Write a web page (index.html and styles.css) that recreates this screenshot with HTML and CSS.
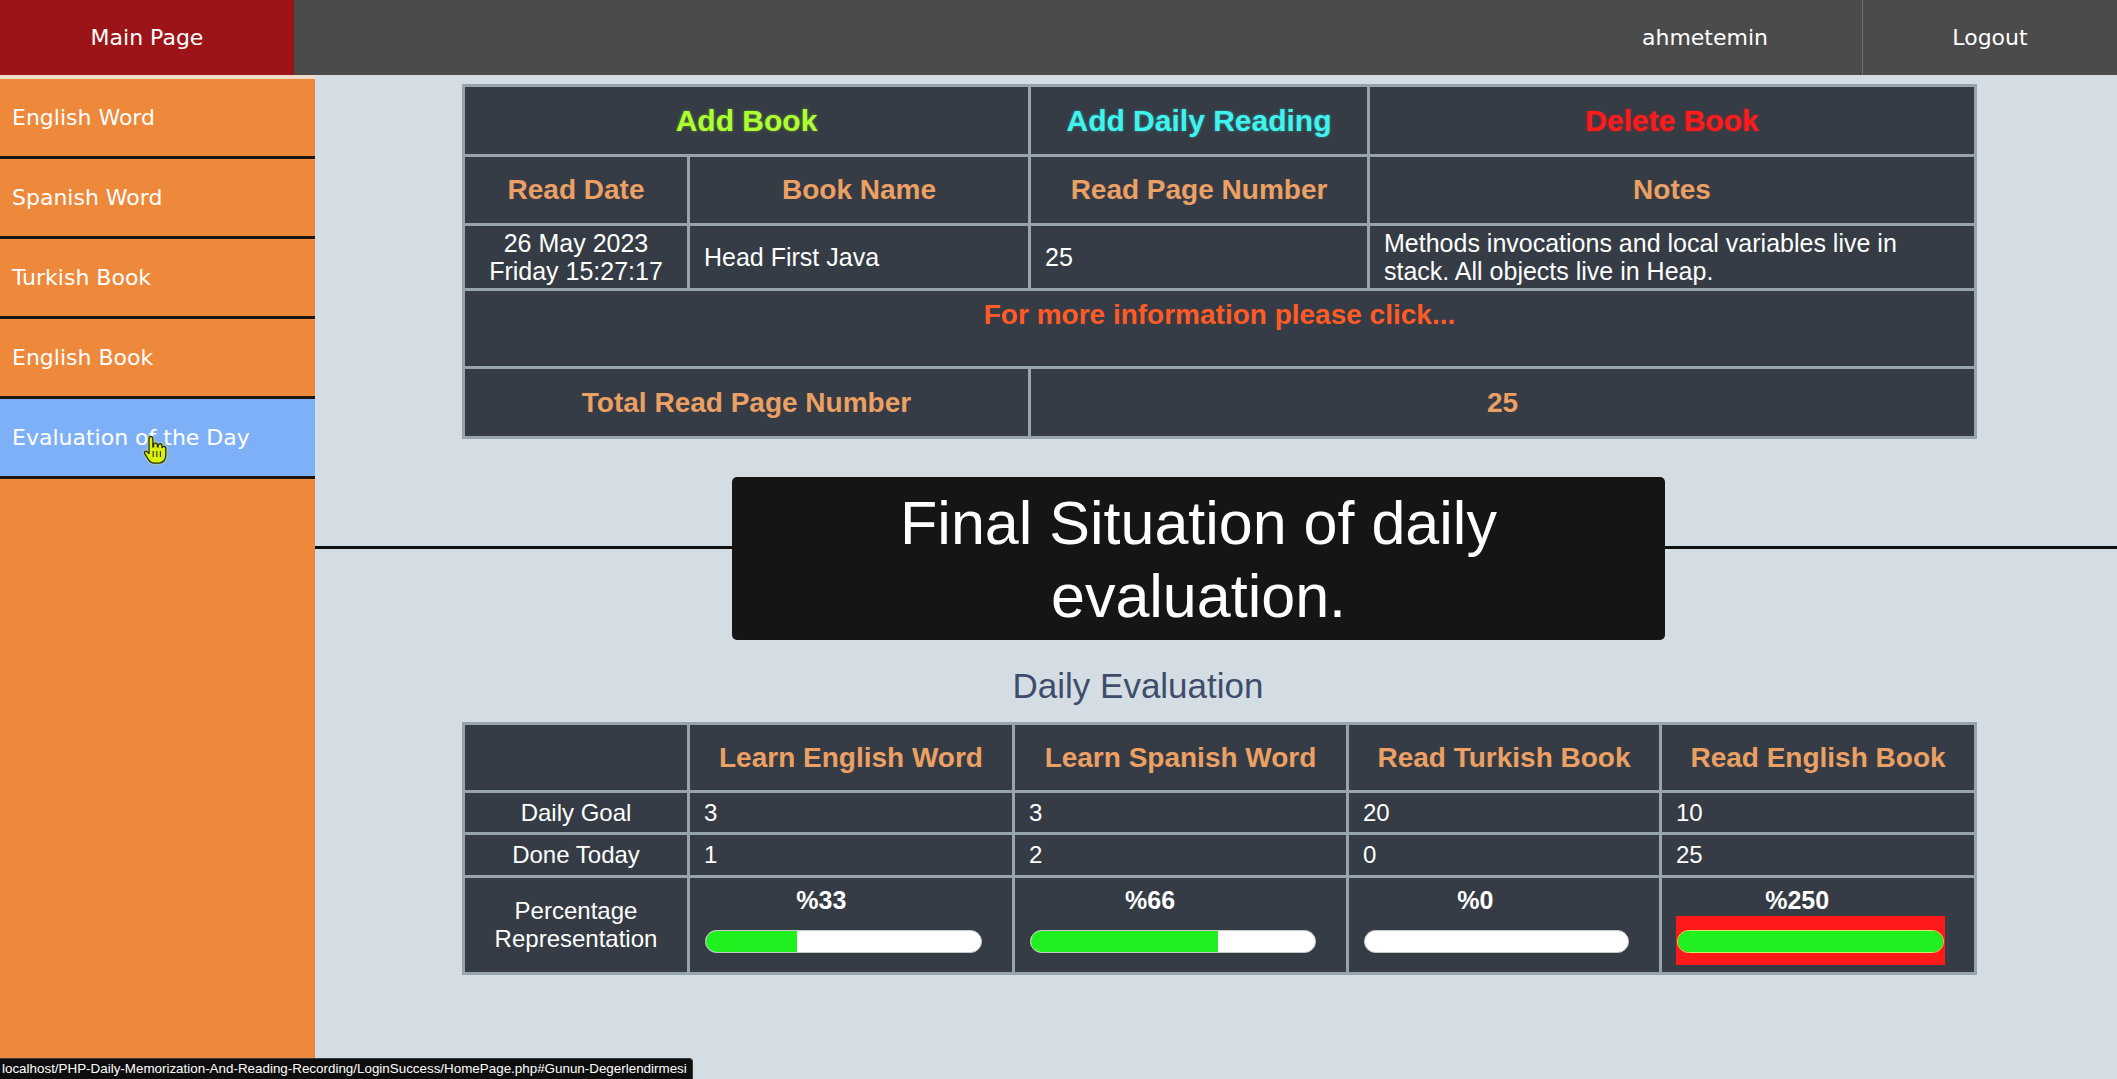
FILE: index.html
```html
<!DOCTYPE html>
<html lang="en">
<head>
<meta charset="utf-8">
<title>Home Page</title>
<link rel="stylesheet" href="styles.css">
</head>
<body>
<header class="topbar">
  <a class="brand" href="#">Main Page</a>
  <div class="spacer"></div>
  <a class="user" href="#">ahmetemin</a>
  <a class="logout" href="#">Logout</a>
</header>
<div class="layout">
  <nav class="sidebar">
    <a class="nav-item" href="#">English Word</a>
    <a class="nav-item" href="#">Spanish Word</a>
    <a class="nav-item" href="#">Turkish Book</a>
    <a class="nav-item" href="#">English Book</a>
    <a class="nav-item active" href="#Gunun-Degerlendirmesi">Evaluation of the Day</a>
  </nav>
  <main class="content">
    <table class="grid book-table">
      <colgroup>
        <col class="bc1"><col class="bc2"><col class="bc3"><col class="bc4">
      </colgroup>
      <tr class="r-action">
        <td colspan="2" class="action add-book">Add Book</td>
        <td class="action add-reading">Add Daily Reading</td>
        <td class="action delete-book">Delete Book</td>
      </tr>
      <tr class="r-head">
        <th>Read Date</th>
        <th>Book Name</th>
        <th>Read Page Number</th>
        <th>Notes</th>
      </tr>
      <tr class="r-data">
        <td class="center">26 May 2023<br>Friday 15:27:17</td>
        <td>Head First Java</td>
        <td>25</td>
        <td>Methods invocations and local variables live in stack. All objects live in Heap.</td>
      </tr>
      <tr class="r-more">
        <td colspan="4" class="more">For more information please click...</td>
      </tr>
      <tr class="r-total">
        <th colspan="2">Total Read Page Number</th>
        <th colspan="2">25</th>
      </tr>
    </table>

    <hr class="divider">

    <h2 class="eval-title" id="Gunun-Degerlendirmesi">Daily Evaluation</h2>

    <table class="grid eval-table">
      <colgroup>
        <col class="ec1"><col class="ec2"><col class="ec3"><col class="ec4"><col class="ec5">
      </colgroup>
      <tr class="e-head">
        <th></th>
        <th>Learn English Word</th>
        <th>Learn Spanish Word</th>
        <th>Read Turkish Book</th>
        <th>Read English Book</th>
      </tr>
      <tr class="e-goal">
        <td class="center">Daily Goal</td>
        <td>3</td><td>3</td><td>20</td><td>10</td>
      </tr>
      <tr class="e-done">
        <td class="center">Done Today</td>
        <td>1</td><td>2</td><td>0</td><td>25</td>
      </tr>
      <tr class="e-pct">
        <td class="center label2">Percentage<br>Representation</td>
        <td class="pct-cell">
          <div class="pct">%33</div>
          <div class="bar-wrap"><div class="bar"><div class="fill" style="width:33%"></div></div></div>
        </td>
        <td class="pct-cell">
          <div class="pct">%66</div>
          <div class="bar-wrap"><div class="bar"><div class="fill" style="width:66%"></div></div></div>
        </td>
        <td class="pct-cell">
          <div class="pct">%0</div>
          <div class="bar-wrap"><div class="bar"><div class="fill" style="width:0%"></div></div></div>
        </td>
        <td class="pct-cell">
          <div class="pct pct-over">%250</div>
          <div class="bar-wrap over"><div class="bar"><div class="fill" style="width:100%"></div></div></div>
        </td>
      </tr>
    </table>
  </main>
</div>

<div class="caption">Final Situation of daily<br>evaluation.</div>

<svg class="cursor" viewBox="0 0 20 24" width="24" height="29" aria-hidden="true">
  <path d="M5 2a1.6 1.6 0 0 1 3.2 0v7h.6V7.4a1.6 1.6 0 0 1 3.2 0V9h.6V8a1.6 1.6 0 0 1 3.2 0v1.6h.3a1.5 1.5 0 0 1 2.9.6V16c0 3.4-2.2 6.5-5.6 6.5H9c-2 0-3.2-1-4.3-2.6L1.4 14.6c-.7-1.1.5-2.6 1.7-1.8L5 14.6z" fill="#d9f20c" stroke="#2a2a10" stroke-width="1.1" stroke-linejoin="round"/>
  <path d="M8.5 12.5v5M11.5 12.5v5M14.5 12.5v5" stroke="#2a2a10" stroke-width="0.9" fill="none"/>
</svg>

<div class="statusbar">localhost/PHP-Daily-Memorization-And-Reading-Recording/LoginSuccess/HomePage.php#Gunun-Degerlendirmesi</div>
</body>
</html>
```

FILE: styles.css
```css
html, body {
  margin: 0;
  padding: 0;
}

body {
  background: #d3dde3;
  font-family: "Liberation Sans", Arial, sans-serif;
  overflow: hidden;
}

a {
  text-decoration: none;
  color: #fff;
}

/* ---------- top bar ---------- */
.topbar {
  display: flex;
  height: 75px;
  background: #4b4b4b;
  font-family: "DejaVu Sans", Verdana, sans-serif;
  font-size: 22px;
}

.topbar a {
  display: flex;
  align-items: center;
  justify-content: center;
  color: #fff;
}

.brand {
  width: 294px;
  background: #9d1418;
}

.spacer {
  flex: 1;
}

.user {
  width: 314px;
}

.logout {
  width: 254px;
  border-left: 1px solid #6e6e6e;
}

/* ---------- layout ---------- */
.layout {
  display: flex;
  min-height: calc(100vh - 75px);
}

.sidebar {
  width: 315px;
  flex: none;
  background: #ee883a;
  border-top: 4px solid #f1dccb;
  display: flex;
  flex-direction: column;
}

.nav-item {
  display: flex;
  align-items: center;
  height: 77px;
  padding-left: 12px;
  border-bottom: 3px solid #1d1613;
  font-family: "DejaVu Sans", Verdana, sans-serif;
  font-size: 22px;
  color: #fff;
}

.nav-item.active {
  background: #7eb0f8;
}

.content {
  flex: 1;
  background: #d3dde3;
  padding-top: 9px;
}

/* ---------- tables ---------- */
.grid {
  border-collapse: separate;
  border-spacing: 3px;
  background: #97a4ae;
  table-layout: fixed;
  width: 1515px;
  margin-left: 147px;
  font-family: "Liberation Sans", Arial, sans-serif;
}

.grid td,
.grid th {
  background: #353c45;
  color: #fff;
  padding: 0 14px;
  vertical-align: middle;
  text-align: left;
  font-weight: normal;
}

.grid th {
  color: #eca064;
  font-size: 28px;
  font-weight: bold;
  text-align: center;
}

.bc1 { width: 222px; }
.bc2 { width: 338px; }
.bc3 { width: 336px; }
.bc4 { width: 604px; }

.r-action td { height: 67px; }
.r-head th { height: 66px; }
.r-data td { height: 62px; font-size: 25px; line-height: 28px; }
.r-more td { height: 67px; }
.r-total th { height: 67px; }

.grid .action {
  font-size: 30px;
  font-weight: bold;
  text-align: center;
}

.grid .add-book {
  color: #adff2f;
  text-shadow: 0 0 3px rgba(173, 255, 47, 0.45);
}

.grid .add-reading {
  color: #3ff3ef;
  text-shadow: 0 0 3px rgba(63, 243, 239, 0.45);
}

.grid .delete-book {
  color: #ff1b1b;
  text-shadow: 0 0 3px rgba(255, 27, 27, 0.5);
}

.grid .center {
  text-align: center;
}

.grid .more {
  color: #ff5b27;
  font-size: 28px;
  font-weight: bold;
  text-align: center;
  vertical-align: top;
  padding-top: 8px;
  line-height: 32px;
}

.divider {
  border: 0;
  height: 3px;
  background: #111;
  margin: 107px 0 0;
}

.eval-title {
  margin: 117px 0 16px;
  padding-right: 156px;
  text-align: center;
  font-family: "Liberation Sans", Arial, sans-serif;
  font-weight: normal;
  font-size: 35px;
  line-height: 40px;
  color: #3f4d6b;
}

.ec1 { width: 222px; }
.ec2 { width: 322px; }
.ec3 { width: 331px; }
.ec4 { width: 310px; }
.ec5 { width: 312px; }

.e-head th { height: 65px; }
.e-goal td { height: 39px; font-size: 24px; }
.e-done td { height: 40px; font-size: 24px; }
.e-pct td { height: 94px; font-size: 24px; }

.grid td.label2 {
  line-height: 28px;
}

.grid td.pct-cell {
  height: 86px;
  vertical-align: top;
  padding: 8px 0 0;
}

.pct {
  margin-left: 15px;
  width: calc((100% - 45px) * 0.84);
  text-align: center;
  font-size: 25px;
  font-weight: bold;
  line-height: 29px;
}

.pct.pct-over {
  margin-left: 23px;
}

.bar-wrap {
  margin: 1px 30px 0 15px;
  padding: 14px 0 12px;
}

.bar-wrap.over {
  background: #ff1a1a;
  margin-left: 14px;
  margin-right: 29px;
  padding-left: 1px;
  padding-right: 1px;
}

.bar {
  height: 23px;
  box-sizing: border-box;
  border: 1px solid #c8c8c8;
  border-radius: 12px;
  background: #fff;
  overflow: hidden;
}

.over .bar {
  border-color: #d9e86a;
}

.fill {
  height: 100%;
  background: #20ef20;
}

/* ---------- overlays ---------- */
.caption {
  position: absolute;
  left: 732px;
  top: 477px;
  width: 933px;
  box-sizing: border-box;
  padding: 10px 0 7px;
  background: #151515;
  border-radius: 5px;
  color: #fff;
  font-family: "Liberation Sans", Arial, sans-serif;
  font-size: 61px;
  line-height: 73px;
  text-align: center;
}

.cursor {
  position: absolute;
  left: 143px;
  top: 436px;
  filter: drop-shadow(0 0 1px #e8ff40);
}

.statusbar {
  position: fixed;
  left: 0;
  bottom: 0;
  width: 693px;
  height: 21px;
  box-sizing: border-box;
  padding-left: 2px;
  background: #0e0e0e;
  border: 1px solid #3a3a3a;
  border-left: 0;
  border-bottom: 0;
  border-top-right-radius: 4px;
  color: #fff;
  font-family: "Liberation Sans", Arial, sans-serif;
  font-size: 13.4px;
  line-height: 20px;
  white-space: nowrap;
  overflow: hidden;
}
```
